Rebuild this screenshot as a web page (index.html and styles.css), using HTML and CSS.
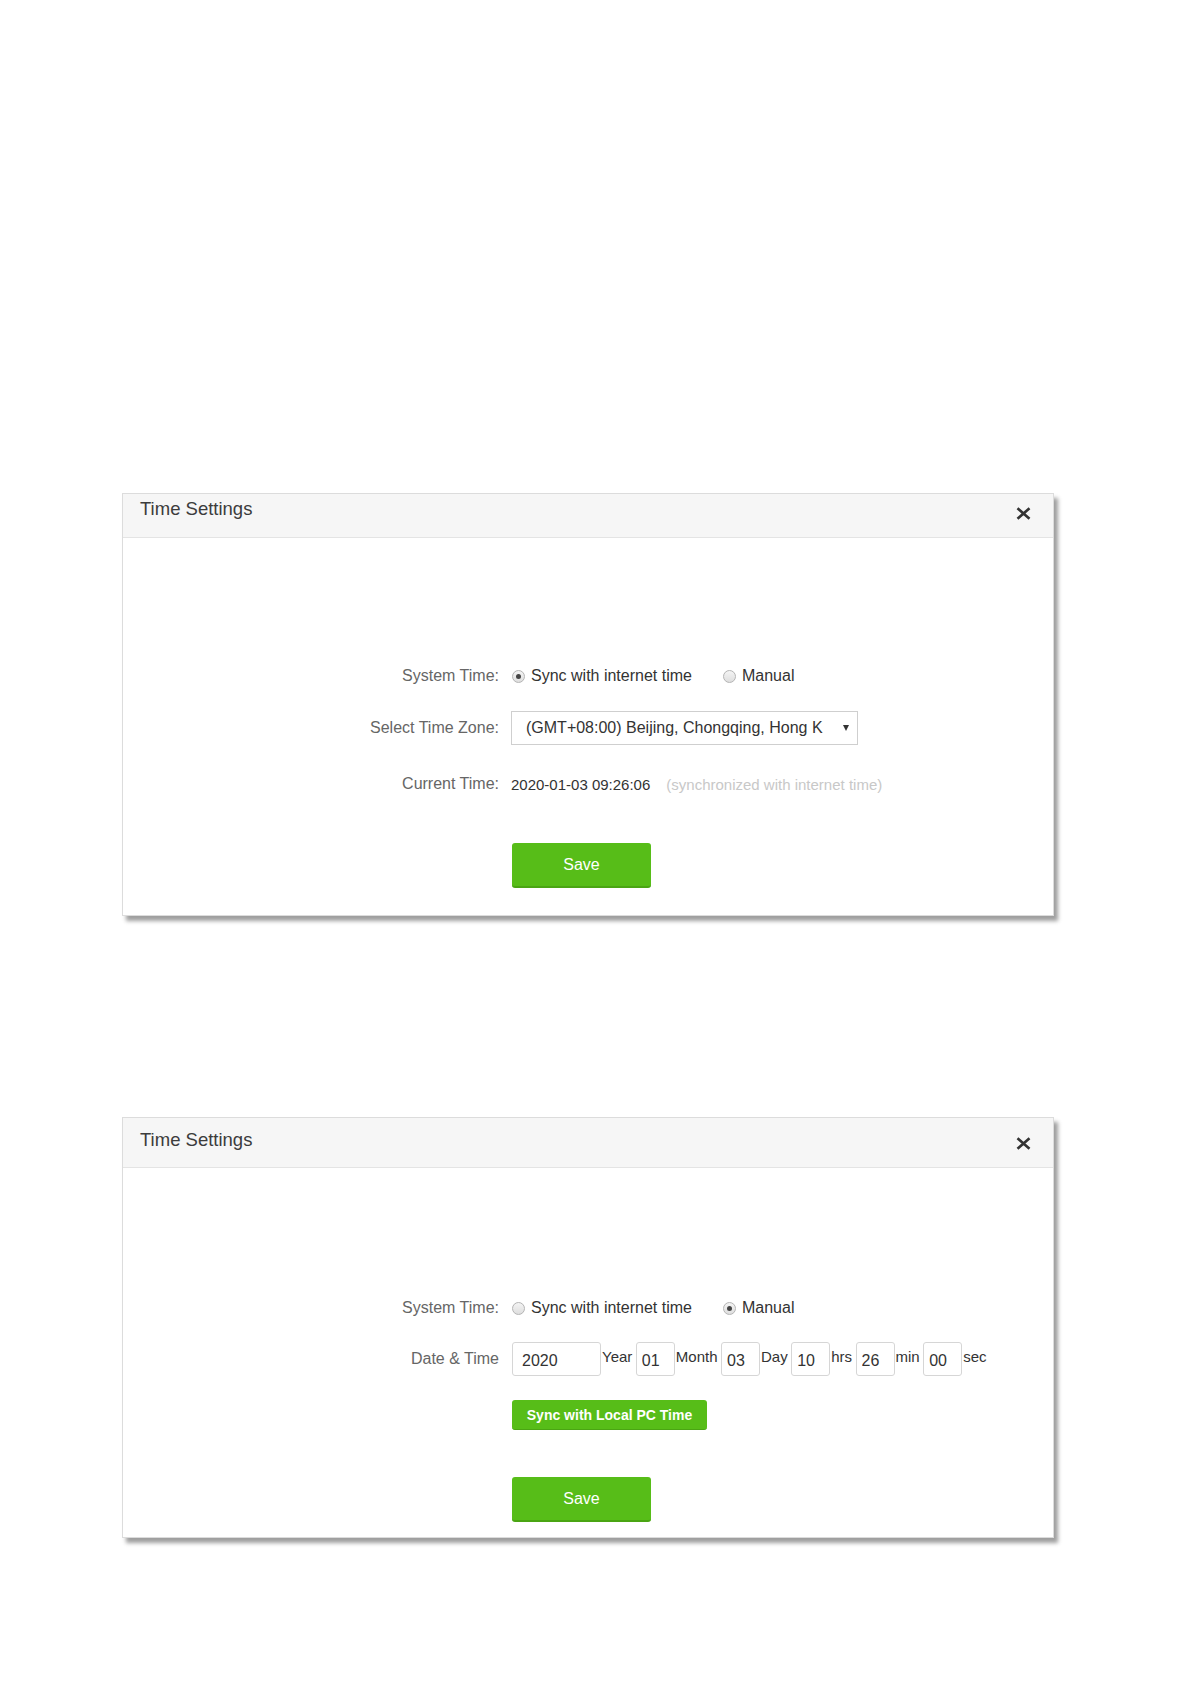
FILE: index.html
```html
<!DOCTYPE html>
<html lang="en">
<head>
  <meta charset="UTF-8">
  <meta name="viewport" content="width=device-width, initial-scale=1.0">
  <title>Time Settings</title>
  <link rel="stylesheet" href="styles.css">
</head>
<body>

  <div class="page">

    <!-- Sync with internet time -->
    <div class="dialog dialog-sync">
      <div class="dialog-head">
        <span class="dialog-title">Time Settings</span>
        <span class="dialog-close">
          <svg width="15" height="13" viewBox="0 0 15 13"><path d="M1.5 1.2 L13.5 11.8 M13.5 1.2 L1.5 11.8" stroke="#333" stroke-width="2.6" fill="none"/></svg>
        </span>
      </div>
      <div class="dialog-body">
        <div class="form-row">
          <span class="form-label">System Time:</span>
          <div class="form-field">
            <span class="radio checked"></span><span class="radio-text">Sync with internet time</span>
            <span class="radio radio-second"></span><span class="radio-text">Manual</span>
          </div>
        </div>
        <div class="form-row row-zone">
          <span class="form-label">Select Time Zone:</span>
          <div class="form-field">
            <div class="select-box">
              <span class="select-text">(GMT+08:00) Beijing, Chongqing, Hong K</span>
              <span class="select-arrow"></span>
            </div>
          </div>
        </div>
        <div class="form-row row-current">
          <span class="form-label">Current Time:</span>
          <div class="form-field">
            <span class="time-value">2020-01-03 09:26:06</span>
            <span class="time-note">(synchronized with internet time)</span>
          </div>
        </div>
        <div class="form-actions">
          <button class="btn btn-save">Save</button>
        </div>
      </div>
    </div>

    <!-- Manual -->
    <div class="dialog dialog-manual">
      <div class="dialog-head">
        <span class="dialog-title">Time Settings</span>
        <span class="dialog-close">
          <svg width="15" height="13" viewBox="0 0 15 13"><path d="M1.5 1.2 L13.5 11.8 M13.5 1.2 L1.5 11.8" stroke="#333" stroke-width="2.6" fill="none"/></svg>
        </span>
      </div>
      <div class="dialog-body">
        <div class="form-row">
          <span class="form-label">System Time:</span>
          <div class="form-field">
            <span class="radio"></span><span class="radio-text">Sync with internet time</span>
            <span class="radio radio-second checked"></span><span class="radio-text">Manual</span>
          </div>
        </div>
        <div class="form-row row-date">
          <span class="form-label">Date &amp; Time</span>
          <div class="form-field">
            <input class="time-input input-year" type="text" value="2020"><span class="unit">Year</span>
            <input class="time-input" type="text" value="01"><span class="unit">Month</span>
            <input class="time-input" type="text" value="03"><span class="unit">Day</span>
            <input class="time-input" type="text" value="10"><span class="unit">hrs</span>
            <input class="time-input" type="text" value="26"><span class="unit">min</span>
            <input class="time-input" type="text" value="00"><span class="unit">sec</span>
          </div>
        </div>
        <div class="form-row row-pc">
          <span class="form-label"></span>
          <div class="form-field">
            <button class="btn btn-sync">Sync with Local PC Time</button>
          </div>
        </div>
        <div class="form-actions">
          <button class="btn btn-save">Save</button>
        </div>
      </div>
    </div>

  </div>

</body>
</html>
```

FILE: styles.css
```css
/* Page */
body {
  margin: 0;
  background: #fff;
  font-family: "Liberation Sans", Arial, sans-serif;
  color: #333;
}
.page {
  padding: 493px 0 60px 122px;
}
/* Dialog */
.dialog {
  width: 932px;
  box-sizing: border-box;
  background: #fff;
  border: 1px solid #dcdcdc;
  box-shadow: 4px 5px 4px rgba(0, 0, 0, 0.38);
}
.dialog-manual {
  margin-top: 201px;
}
.dialog-head {
  display: flex;
  justify-content: space-between;
  align-items: flex-start;
  height: 44px;
  padding: 5px 22px 0 17px;
  box-sizing: border-box;
  background: #f6f6f6;
  border-bottom: 1px solid #e4e4e4;
}
.dialog-manual .dialog-head {
  height: 50px;
  padding-top: 12px;
}
.dialog-title {
  font-size: 18.5px;
  line-height: 20px;
  color: #3c3c3c;
}
.dialog-close {
  display: block;
  height: 13px;
  margin-top: 8px;
}
.dialog-manual .dialog-close {
  margin-top: 7px;
}
.dialog-close svg {
  display: block;
}
.dialog-body {
  padding: 121px 0 27px 0;
}
.dialog-manual .dialog-body {
  padding: 123px 0 15px 0;
}
/* Form rows */
.form-row {
  display: flex;
  align-items: center;
  height: 34px;
}
.form-label {
  width: 376px;
  margin-right: 12px;
  text-align: right;
  font-size: 16px;
  color: #666;
}
.form-field {
  display: flex;
  align-items: center;
}
.row-zone {
  margin-top: 18px;
}
.row-current {
  margin-top: 22px;
}
.row-date {
  margin-top: 17px;
}
.row-pc {
  margin-top: 24px;
  height: 30px;
}
/* Radios */
.radio {
  width: 11px;
  height: 11px;
  margin-left: 1px;
  margin-right: 6px;
  border: 1px solid #b4b4b4;
  border-radius: 50%;
  background: linear-gradient(to bottom, #f4f4f4, #dedede);
  position: relative;
}
.radio.checked::after {
  content: "";
  position: absolute;
  left: 3px;
  top: 3px;
  width: 5px;
  height: 5px;
  border-radius: 50%;
  background: #444;
}
.radio-second {
  margin-left: 31px;
}
.radio-text {
  font-size: 16px;
  color: #333;
}
/* Select */
.select-box {
  display: flex;
  align-items: center;
  justify-content: space-between;
  width: 347px;
  height: 34px;
  box-sizing: border-box;
  padding: 0 8px 0 14px;
  border: 1px solid #cfcfcf;
  background: #fff;
}
.select-text {
  font-size: 16px;
  color: #333;
  white-space: nowrap;
  overflow: hidden;
}
.select-arrow {
  width: 0;
  height: 0;
  border-left: 3.5px solid transparent;
  border-right: 3.5px solid transparent;
  border-top: 6px solid #333;
}
/* Current time */
.time-value {
  font-size: 15px;
  color: #333;
}
.time-note {
  margin-left: 16px;
  font-size: 15px;
  color: #c8c8c8;
}
/* Date inputs */
.time-input {
  width: 39px;
  height: 34px;
  box-sizing: border-box;
  margin: 0 0 0 1px;
  padding: 3px 0 0 5px;
  border: 1px solid #d6d6d6;
  border-radius: 3px;
  font-family: "Liberation Sans", Arial, sans-serif;
  font-size: 16px;
  color: #333;
  outline: none;
}
.input-year {
  width: 89px;
  padding-left: 9px;
}
.unit {
  padding: 0 2.5px 0 1px;
  margin-bottom: 5px;
  font-size: 15px;
  color: #333;
}
/* Buttons */
.btn {
  display: block;
  border: none;
  border-radius: 3px;
  background: #57bd18;
  color: #fff;
  font-family: "Liberation Sans", Arial, sans-serif;
  cursor: pointer;
}
.form-actions {
  padding-left: 389px;
  margin-top: 42px;
}
.dialog-manual .form-actions {
  margin-top: 47px;
}
.btn-save {
  width: 139px;
  height: 45px;
  font-size: 16px;
  border-bottom: 2px solid #4aa513;
}
.btn-sync {
  width: 195px;
  height: 30px;
  margin-left: 1px;
  font-size: 14px;
  font-weight: bold;
  border-bottom: 1px solid #4aa513;
}
```
